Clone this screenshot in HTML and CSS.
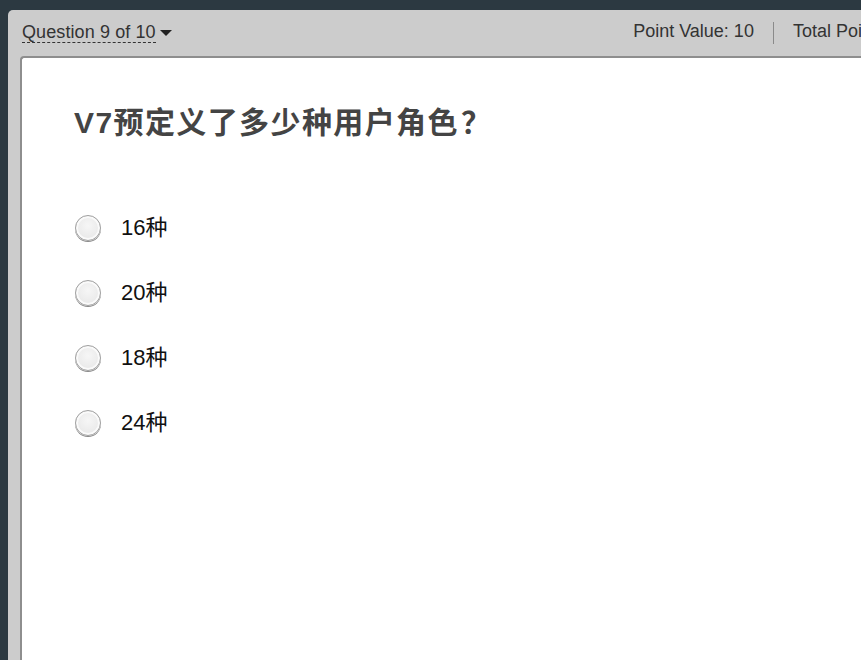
FILE: index.html
```html
<!DOCTYPE html>
<html lang="zh">
<head>
<meta charset="utf-8">
<title>Quiz</title>
<link rel="stylesheet" href="styles.css">
</head>
<body>
<div class="frame">
  <div class="header">
    <div class="qnav"><span class="qlabel">Question 9 of 10</span><span class="caret"></span></div>
    <div class="points">
      <span>Point Value: 10</span>
      <span class="sep"></span>
      <span>Total Points: 100</span>
    </div>
  </div>
  <div class="card">
    <h1 class="title">V7预定义了多少种用户角色<span class="cjk">？</span></h1>
    <ul class="options">
      <li class="option"><span class="radio"></span><span class="otext">16种</span></li>
      <li class="option"><span class="radio"></span><span class="otext">20种</span></li>
      <li class="option"><span class="radio"></span><span class="otext">18种</span></li>
      <li class="option"><span class="radio"></span><span class="otext">24种</span></li>
    </ul>
  </div>
</div>
</body>
</html>
```
FILE: styles.css
```css
html, body {
  margin: 0;
  padding: 0;
}
body {
  background: #2c3941;
  overflow: hidden;
  width: 861px;
  height: 660px;
  font-family: "Liberation Sans", Arial, "Noto Sans CJK SC", sans-serif;
}
.frame {
  margin: 10px 0 0 8px;
  width: 932px;
  height: 660px;
  background: #cccccc;
  border-radius: 5px 0 0 0;
  display: flex;
  flex-direction: column;
}
.header {
  height: 43px;
  flex: 0 0 43px;
  display: flex;
  align-items: center;
  padding: 0 14px 3px 14px;
  color: #333;
  font-size: 18px;
}
.qnav {
  display: flex;
  align-items: center;
}
.qlabel {
  border-bottom: 1px dashed #333;
  line-height: 20px;
  padding-top: 2px;
  letter-spacing: 0.1px;
}
.caret {
  width: 0;
  height: 0;
  border-left: 6px solid transparent;
  border-right: 6px solid transparent;
  border-top: 6px solid #222;
  margin-left: 4px;
  margin-top: 2px;
}
.points {
  margin-left: auto;
  display: flex;
  align-items: center;
  white-space: nowrap;
  gap: 19px;
}
.sep {
  width: 1px;
  height: 22px;
  background: #8a8a8a;
  margin-top: 2px;
}
.card {
  flex: 1;
  margin-left: 12px;
  background: #fff;
  border-top: 2px solid #8e8e8e;
  border-left: 2px solid #8e8e8e;
  border-top-left-radius: 4px;
  padding: 0 0 0 52px;
}
.title {
  margin: 42px 0 0 0;
  font-size: 30px;
  line-height: 40px;
  height: 40px;
  font-weight: bold;
  color: #444;
  letter-spacing: 1.4px;
  font-family: "Liberation Sans", Arial, "Noto Sans CJK SC", sans-serif;
}
.cjk {
  font-family: "Noto Sans CJK JP", sans-serif;
  font-weight: bold;
  margin-left: 2px;
}
.options {
  list-style: none;
  margin: 55px 0 0 0;
  padding: 0;
}
.option {
  display: flex;
  align-items: center;
  height: 65px;
}
.radio {
  width: 24px;
  height: 24px;
  border: 1px solid #a0a0a0;
  border-radius: 50%;
  background: radial-gradient(circle at 50% 40%, #f6f6f6 0%, #ebebeb 60%, #e2e2e2 100%);
  box-shadow: inset 0 0 0 2px #fafafa, 0 1px 0 #8a8a8a;
  margin-left: 1px;
  flex: 0 0 auto;
}
.otext {
  margin-left: 20px;
  font-size: 22px;
  line-height: 26px;
  color: #111;
}
```
